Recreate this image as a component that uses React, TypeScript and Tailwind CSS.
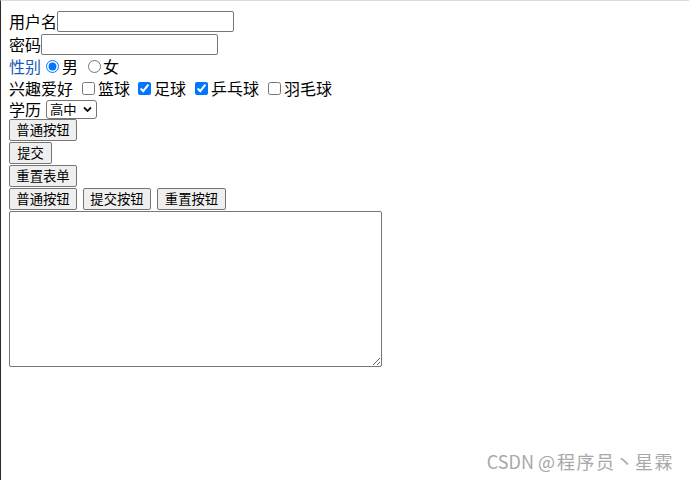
import React from "react";

const btn =
  "h-[22px] border border-[#767676] rounded-[2px] bg-[#efefef] text-[13.33px] leading-none text-black px-[6px] flex items-center justify-center";

export default function App() {
  return (
    <div className="relative min-h-[480px] bg-white border-t border-l border-t-[#dcdcdc] border-l-[#2b2b2b] font-['Noto_Sans_CJK_SC','Microsoft_YaHei',sans-serif] text-[16px] text-black">
      <form className="pt-[8px] pl-[8px]">
        {/* account fields */}
        <div className="flex items-center h-[23px] leading-none">
          <span>用户名</span>
          <input
            type="text"
            className="mt-[2px] w-[177px] h-[21px] border border-[#767676] rounded-[2px] px-[2px] text-[13.33px] bg-white"
          />
        </div>
        <div className="flex items-center h-[23px] leading-none">
          <span>密码</span>
          <input
            type="password"
            className="mt-[2px] w-[177px] h-[21px] border border-[#767676] rounded-[2px] px-[2px] text-[13.33px] bg-white"
          />
        </div>

        {/* gender */}
        <div className="flex items-center h-[22px] leading-none">
          <span className="text-[#1c58b8]">性别</span>
          <input type="radio" name="sex" defaultChecked className="ml-[5px] mr-[3px] w-[13px] h-[13px]" />
          <span>男</span>
          <input type="radio" name="sex" className="ml-[10px] mr-[2px] w-[13px] h-[13px]" />
          <span>女</span>
        </div>

        {/* hobbies */}
        <div className="flex items-center h-[22px] leading-none">
          <span>兴趣爱好</span>
          <input type="checkbox" className="ml-[9px] mr-[3px] w-[13px] h-[13px]" />
          <span>篮球</span>
          <input type="checkbox" defaultChecked className="ml-[8px] mr-[3px] w-[13px] h-[13px]" />
          <span>足球</span>
          <input type="checkbox" defaultChecked className="ml-[9px] mr-[3px] w-[13px] h-[13px]" />
          <span>乒乓球</span>
          <input type="checkbox" className="ml-[9px] mr-[3px] w-[13px] h-[13px]" />
          <span>羽毛球</span>
        </div>

        {/* education */}
        <div className="flex items-center h-[20px] leading-none">
          <span className="-mt-[1px]">学历</span>
          <div className="relative ml-[5px] mt-[1px] w-[51px] h-[19px]">
            <select
              defaultValue="gz"
              className="appearance-none block w-full h-full border border-[#767676] rounded-[3px] bg-white text-[13.33px] leading-none pl-[3px] pr-[16px]"
            >
              <option value="cz">初中</option>
              <option value="gz">高中</option>
              <option value="dx">大学</option>
            </select>
            <svg
              className="pointer-events-none absolute right-[5px] top-[6px]"
              width="9"
              height="7"
              viewBox="0 0 9 7"
            >
              <path d="M1 1.5 L4.5 5 L8 1.5" fill="none" stroke="#111" strokeWidth="1.8" />
            </svg>
          </div>
        </div>

        {/* buttons */}
        <div className="flex items-start h-[23px]">
          <button type="button" className={`${btn} w-[68px]`}>普通按钮</button>
        </div>
        <div className="flex items-start h-[23px]">
          <button type="button" className={`${btn} w-[43px]`}>提交</button>
        </div>
        <div className="flex items-start h-[23px]">
          <button type="button" className={`${btn} w-[68px]`}>重置表单</button>
        </div>
        <div className="flex items-start h-[23px] gap-[6px]">
          <button type="button" className={`${btn} w-[68px]`}>普通按钮</button>
          <button type="button" className={`${btn} w-[68px]`}>提交按钮</button>
          <button type="button" className={`${btn} w-[69px]`}>重置按钮</button>
        </div>

        <textarea className="block w-[373px] h-[156px] border border-[#767676] rounded-[2px] bg-white text-[13.33px]" />
      </form>

      <div className="absolute right-[15px] top-[449px] flex items-center h-[22px] text-[#a8a8a8] whitespace-nowrap">
        <span className="text-[18px] leading-none">CSDN @</span>
        <span className="ml-[2px] text-[18px] leading-none tracking-[1.5px]">程序员丶星霖</span>
      </div>
    </div>
  );
}
